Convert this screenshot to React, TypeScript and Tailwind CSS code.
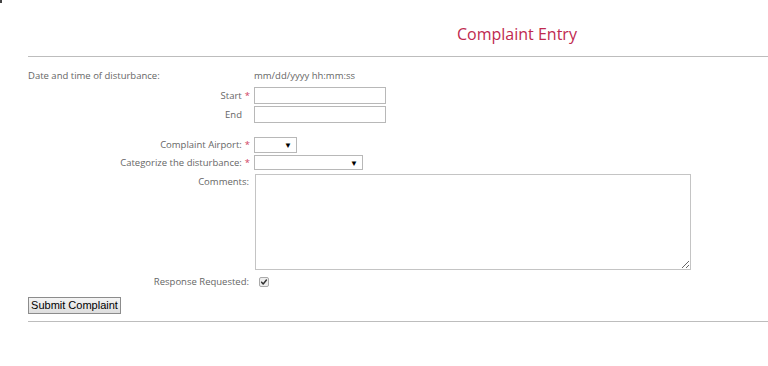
export default function App() {
  const label = 'text-right text-[9.5px] leading-none text-[#666]';
  const star = <span className="ml-[3px] text-[#d0435f]">*</span>;

  return (
    <div className="relative h-[366px] w-[768px] overflow-hidden bg-white font-['Open_Sans',sans-serif]">
      <div className="absolute left-0 top-0 h-[3px] w-[2px] bg-[#444]" />

      <div className="pl-[457px] pt-[23px] text-[16px] leading-[22px] text-[#c0294f]">Complaint Entry</div>

      <div className="ml-[28px] mt-[11px] h-px bg-[#bdbdbd]" />

      <div className="ml-[28px] mt-[12px] grid grid-cols-[222px_1fr] items-center gap-x-[4px]">
        <div className="text-[9.5px] leading-[14px] text-[#666]">Date and time of disturbance:</div>
        <div className="text-[9.5px] leading-[14px] text-[#666]">mm/dd/yyyy hh:mm:ss</div>

        <div className={`${label} mt-[4px]`}>Start{star}</div>
        <div className="mt-[4px] h-[17px] w-[132px] border border-[#b8b8b8]" />

        <div className={`${label} mt-[2px] pr-[8px]`}>End</div>
        <div className="mt-[2px] h-[17px] w-[132px] border border-[#b8b8b8]" />

        <div className={`${label} mt-[14px]`}>Complaint Airport:{star}</div>
        <div className="mt-[14px] flex h-[16px] w-[43px] items-center justify-end border border-[#b8b8b8] pr-[4px] text-[8px] leading-none text-black">▼</div>

        <div className={`${label} mt-[2px]`}>Categorize the disturbance:{star}</div>
        <div className="mt-[2px] flex h-[15px] w-[109px] items-center justify-end border border-[#b8b8b8] pr-[4px] text-[8px] leading-none text-black">▼</div>

        <div className={`${label} mt-[5px] self-start pr-[1px] pt-[2px]`}>Comments:</div>
        <textarea className="mt-[4px] ml-[1px] h-[96px] w-[436px] border border-[#c4c4c4] bg-white outline-none" />

        <div className={`${label} mt-[7px] pr-[1px]`}>Response Requested:</div>
        <div className="mt-[7px] flex pl-[5px]">
          <span className="flex h-[10px] w-[10px] items-center justify-center rounded-[2px] border border-[#aaa] bg-[#eee]">
            <svg viewBox="0 0 10 10" width="8" height="8" fill="none" stroke="#333" strokeWidth="1.8" strokeLinecap="round" strokeLinejoin="round">
              <polyline points="2 5.2 4 7.5 8 2.5" />
            </svg>
          </span>
        </div>
      </div>

      <button className="ml-[28px] mt-[10px] flex h-[17px] w-[93px] items-center justify-center border border-[#8c8c8c] bg-gradient-to-b from-[#f4f4f4] to-[#dedede] font-['Liberation_Sans',sans-serif] text-[11px] leading-none text-black">
        Submit Complaint
      </button>

      <div className="ml-[28px] mt-[7px] h-px bg-[#bdbdbd]" />
    </div>
  );
}
